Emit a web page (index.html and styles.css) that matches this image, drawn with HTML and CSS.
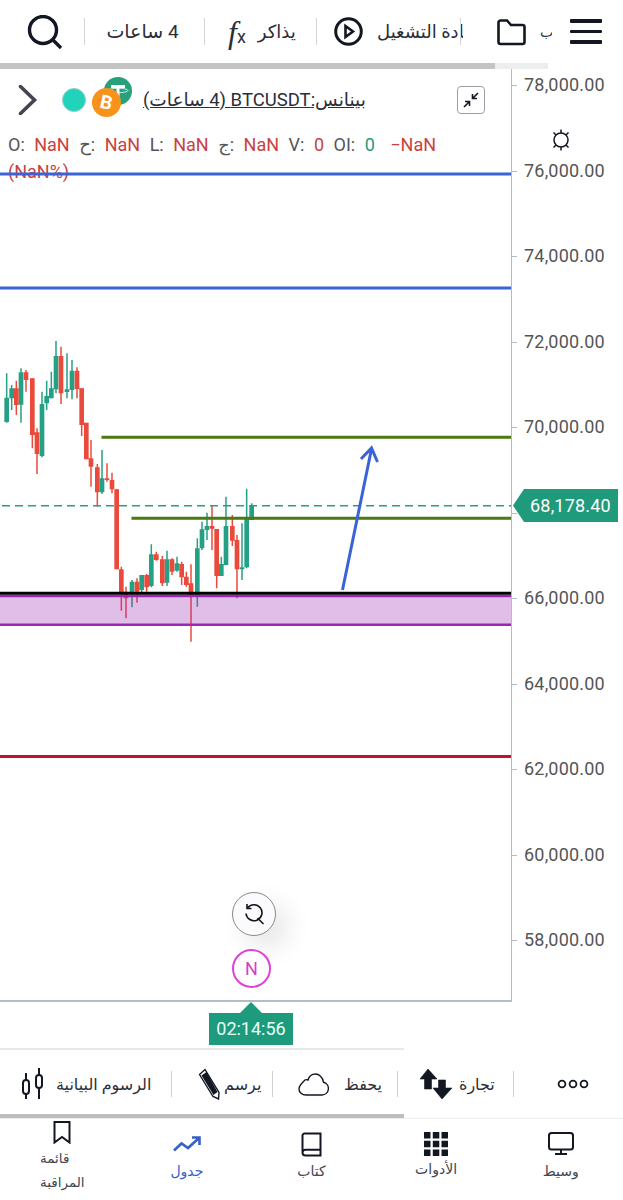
FILE: index.html
```html
<!DOCTYPE html>
<html lang="ar">
<head>
  <meta charset="UTF-8" />
  <title>BTCUSDT</title>
  <link rel="stylesheet" href="styles.css">
</head>
<body>
  <!-- Top toolbar -->
  <div class="topbar">
    <div class="seg seg-search">
      <svg width="36" height="34" viewBox="0 0 36 34" fill="none" stroke="#131722" stroke-width="3.4"><circle cx="16" cy="15" r="13.5"/><path d="M26 25l8 8"/></svg>
    </div>
    <div class="seg seg-time"><span dir="rtl">4 ساعات</span></div>
    <div class="seg seg-fx"><span class="fx"><i>f</i><b>x</b></span><span>يذاكر</span></div>
    <div class="seg seg-play">
      <svg class="play" width="29" height="29" viewBox="0 0 29 29" fill="none" stroke="#131722" stroke-width="3"><circle cx="14.5" cy="14.5" r="12.8"/><path d="M11.5 9l7.5 5.500-7.500 5.500z" stroke-width="2.600"/></svg>
      <span class="clipped"><span dir="rtl">إعادة التشغيل</span></span>
    </div>
    <div class="seg seg-menu">
      <svg width="29" height="29" viewBox="0 0 29 29" fill="none" stroke="#131722" stroke-width="2.600"><path d="M1.500 5.500a2 2 0 0 1 2-2h6.500l4 4.500h11.500a2 2 0 0 1 2 2v15a2 2 0 0 1-2 2h-22a2 2 0 0 1-2-2z"/></svg>
      <span class="cut">ب</span>
      <div class="burger"><i></i><i></i><i></i></div>
    </div>
  </div>
  <div class="top-scroll"><div class="top-thumb"></div></div>

  <!-- Chart and price axis -->
  <div class="chart-row">
    <div class="chart">
      <div class="legend">
        <div class="symbol-row">
          <svg class="chevron" width="20" height="30" viewBox="0 0 20 30" fill="none" stroke="#434651" stroke-width="3.600" stroke-linecap="round"><path d="M2.500 1.500l14 13.500-14 13.500"/></svg>
          <span class="dot"></span>
          <svg class="coins" width="42" height="40" viewBox="0 0 42 40">
            <circle cx="26" cy="14" r="14" fill="#26a17b"/>
            <path d="M19 8h14v3h-5.500v10h-3v-10h-5.500z" fill="#fff"/>
            <ellipse cx="26" cy="13.500" rx="10" ry="2.200" fill="none" stroke="#fff" stroke-width=".8"/>
            <circle cx="14.500" cy="25.500" r="14.500" fill="#f7931a"/>
            <text x="14.500" y="32" class="coin-b" transform="rotate(12 14.500 25)">B</text>
          </svg>
          <span class="symbol" dir="rtl">بينانس:BTCUSDT (4 ساعات)</span>
          <button class="collapse">
            <svg width="18" height="18" viewBox="0 0 18 18" fill="none" stroke="#131722" stroke-width="1.600"><path d="M16 2l-5.500 5.500M10.500 3v4.500H15M2 16l5.500-5.500M7.500 15v-4.500H3"/></svg>
          </button>
        </div>
        <div class="ohlc">
          <span>O: <em>NaN</em></span>
          <span>ح: <em>NaN</em></span>
          <span>L: <em>NaN</em></span>
          <span>ج: <em>NaN</em></span>
          <span>V: <em>0</em></span>
          <span>OI: <u>0</u></span>
          <span class="change"><em>−NaN</em></span>
          <span><em>(NaN%)</em></span>
        </div>
      </div>

      <!-- viewBox uses page coordinates; candles are traced at 3x -->
      <svg class="plot" viewBox="0 69 511 931" preserveAspectRatio="none">
        <path d="M0 174H511M0 288H511" stroke="#3a63d8" stroke-width="3" fill="none"/>
        <g transform="translate(0 330) scale(.33333)" fill="none">
          <path stroke="#26a085" stroke-width="4.500" d="M20 130V278M35 165V240M63 115V278M126 185V382M140 152V240M154 125V205M168 33V190M201 70V205M216 90V208M306 360V492M396 750V832M425 735V790M454 643V772M501 662V768M531 680V725M592 625V830M606 575V660M621 548V630M664 680V738M678 500V705M726 580V750M740 476V715M755 520V570"/>
          <path stroke="#26a085" stroke-width="14" d="M20 203V276M35 175V205M63 127V224M126 222V378M140 198V220M154 175V205M168 78V178M201 178V186M216 122V180M306 445V487M396 755V790M425 735V780M454 673V768M501 688V758M531 700V722M592 655V800M606 598V655M621 588V600M664 702V738M678 588V705M726 712V718M740 565V712M755 525V570"/>
          <path stroke="#ea4a3c" stroke-width="4.500" d="M49 152V255M78 120V185M97 145V355M111 295V432M183 50V222M231 112V205M245 175V318M259 278V388M273 330V470M292 402V530M321 400V455M336 428V490M350 478V718M364 710V842M378 770V865M411 745V818M440 732V785M469 665V692M487 678V768M516 685V735M545 695V765M559 725V770M573 703V935M636 528V660M650 597V775M697 555V648M711 615V805"/>
          <path stroke="#ea4a3c" stroke-width="14" d="M49 175V225M78 127V150M97 145V315M111 307V372M183 78V190M231 122V177M245 175V285M259 278V388M273 385V410M292 412V487M321 445V450M336 450V478M350 478V718M364 718V790M378 785V805M411 755V785M440 735V772M469 673V690M487 688V760M516 688V725M545 702V742M559 740V765M573 760V800M636 588V596M650 597V738M697 588V632M711 630V718"/>
        </g>
        <rect x="0" y="595" width="511" height="30" fill="#9c27b0" fill-opacity=".3"/>
        <path d="M0 596H511M0 624.700H511" stroke="#9c27b0" stroke-width="2.500" fill="none"/>
        <path d="M0 593.300H511" stroke="#000" stroke-width="3" fill="none"/>
        <path d="M2 505.700H511" stroke="#26a085" stroke-width="1.500" stroke-dasharray="8 5" fill="none"/>
        <path d="M101.500 437.300H511M131.500 518.300H511" stroke="#4a7a10" stroke-width="3" fill="none"/>
        <path d="M0 756.500H511" stroke="#c8102e" stroke-width="3" fill="none"/>
        <path d="M342.500 590L371.500 449M361 459l10.500-11 6 14" stroke="#3a63d8" stroke-width="3" fill="none"/>
      </svg>

      <button class="reset">
        <svg width="22" height="22" viewBox="0 0 22 22" fill="none" stroke="#131722" stroke-width="1.600"><path d="M4.500 5A8 8 0 1 1 3 10.500M4 1v4.500h4.500M14.500 15l6 6"/></svg>
      </button>
      <div class="news">N</div>
    </div>

    <div class="axis">
      <div class="tick">78,000.00</div>
      <div class="tick">76,000.00</div>
      <div class="tick">74,000.00</div>
      <div class="tick">72,000.00</div>
      <div class="tick">70,000.00</div>
      <div class="tick"></div>
      <div class="tick">66,000.00</div>
      <div class="tick">64,000.00</div>
      <div class="tick">62,000.00</div>
      <div class="tick">60,000.00</div>
      <div class="tick">58,000.00</div>
      <svg class="sun" width="24" height="24" viewBox="0 0 24 24" fill="none" stroke="#131722" stroke-width="1.500"><circle cx="12" cy="12" r="7"/><path d="M12 1.500v3.500M12 19v3.500M4.500 4.500l2.500 2.500M17 17l2.500 2.500M19.500 4.500L17 7M7 17l-2.500 2.500"/></svg>
      <div class="price-tag">68,178.40</div>
    </div>
  </div>

  <!-- Countdown below the time scale -->
  <div class="countdown"><span class="timer">02:14:56</span></div>

  <!-- Drawing toolbar -->
  <div class="toolbar">
    <div class="tool tool-charts">
      <svg width="24" height="32" viewBox="0 0 24 32" fill="none" stroke="#131722" stroke-width="2"><rect x="2" y="12" width="6" height="14" rx="3"/><path d="M5 5v7M5 26v5M18 0v7M18 20v11"/><rect x="15" y="7" width="6" height="13" rx="3"/></svg>
      <span>الرسوم البيانية</span>
    </div>
    <div class="tool tool-draw">
      <svg width="22" height="32" viewBox="0 0 22 32"><path d="M1.500 6.500L7 1.500l14 23-.5 6.500-5.500-2.500z" fill="#fff" stroke="#131722" stroke-width="1.400"/><path d="M3.500 7.500l5-3.500 11 20-4 3z" fill="#131722"/></svg>
      <span>يرسم</span>
    </div>
    <div class="tool tool-save">
      <svg width="31" height="23" viewBox="0 0 31 23" fill="none" stroke="#131722" stroke-width="1.400"><path d="M8 22h16a6.500 6.500 0 0 0 1.500-12.800C24.800 4 21 1 17.500 1c-4 0-6.500 2.500-7.500 6-1-.5-2.500-.4-3.500.3C4.500 10 1 12 1 16c0 3.500 3 6 7 6z"/></svg>
      <span>يحفظ</span>
    </div>
    <div class="tool tool-trade">
      <svg width="33" height="32" viewBox="0 0 33 32" fill="#131722"><path d="M8 1l9 10h-5.500v10h-7v-10H0zM22 31l-9-11h5.500V12h7v8H32z" stroke="#131722" stroke-width=".6"/></svg>
      <span>تجارة</span>
    </div>
    <div class="tool tool-more">
      <svg width="32" height="10" viewBox="0 0 32 10" fill="none" stroke="#131722" stroke-width="1.800"><circle cx="5" cy="5" r="3.400"/><circle cx="16" cy="5" r="3.400"/><circle cx="27" cy="5" r="3.400"/></svg>
    </div>
  </div>
  <div class="tool-scroll"></div>

  <!-- Bottom navigation -->
  <nav class="bottom-nav">
    <div class="nav-item nav-watch">
      <svg width="18" height="23" viewBox="0 0 18 23" fill="none" stroke="#131722" stroke-width="2"><path d="M1.500 1h15v20.500L9 16l-7.500 5.500z"/></svg>
      <span>قائمة<br>المراقبة</span>
    </div>
    <div class="nav-item active">
      <svg width="28" height="16" viewBox="0 0 28 16" fill="none" stroke="#3560c8" stroke-width="2.600"><path d="M1 14.500l7.500-7 6.500 4.500L26 2M19 1.500h7.500V9"/></svg>
      <span>جدول</span>
    </div>
    <div class="nav-item">
      <svg width="21" height="25" viewBox="0 0 21 25" fill="none" stroke="#131722" stroke-width="2"><path d="M1.500 20.500V3.500a2 2 0 0 1 2-2h16v22h-15a3 3 0 0 1-3-3zM1.500 20.500a3 3 0 0 1 3-2.800h15"/></svg>
      <span>كتاب</span>
    </div>
    <div class="nav-item nav-tools">
      <svg width="24" height="24" viewBox="0 0 24 24" fill="#131722"><path d="M0 0h6.500v6.500H0zM8.800 0h6.500v6.500H8.800zM17.500 0H24v6.500h-6.500zM0 8.800h6.500v6.500H0zM8.800 8.800h6.500v6.500H8.800zM17.500 8.800H24v6.500h-6.500zM0 17.500h6.500V24H0zM8.800 17.500h6.500V24H8.800zM17.500 17.500H24V24h-6.500z"/></svg>
      <span>الأدوات</span>
    </div>
    <div class="nav-item nav-broker">
      <svg width="26" height="23" viewBox="0 0 26 23" fill="none" stroke="#131722" stroke-width="2"><rect x="1" y="1" width="24" height="16.500" rx="2.500"/><path d="M13 17.500V22M7 22h12"/></svg>
      <span>وسيط</span>
    </div>
  </nav>
</body>
</html>
```

FILE: styles.css
```css
* {
  box-sizing: border-box;
}
html, body {
  margin: 0;
  height: 1200px;
  overflow: hidden;
  background: #fff;
}
body {
  font-family: Roboto, "Noto Sans", "DejaVu Sans", sans-serif;
  color: #2a2e39;
}
button {
  padding: 0;
  font: inherit;
}

/* top toolbar */
.topbar {
  display: grid;
  grid-template-columns: 84px 120px 112px 144px 1fr;
  height: 63px;
  align-items: center;
  font-size: 18px;
}
.seg {
  display: flex;
  align-items: center;
  height: 27px;
  border-left: 1px solid #d6d6d6;
}
.seg-search {
  border-left: none;
  padding-left: 27px;
}
.seg-time {
  justify-content: center;
  padding-right: 4px;
  font-size: 19px;
}
.seg-fx {
  gap: 12px;
  padding-left: 23px;
}
.fx {
  display: flex;
  align-items: flex-end;
}
.fx i {
  font: italic 32px "Liberation Serif", serif;
  line-height: 30px;
}
.fx b {
  font-weight: 400;
  font-size: 18px;
  line-height: 20px;
}
.seg-play {
  gap: 14px;
  padding-left: 17px;
}
.play {
  flex: none;
}
.clipped {
  width: 86px;
  flex: none;
  overflow: hidden;
  white-space: nowrap;
}
.seg-menu {
  padding-left: 36px;
}
.cut {
  width: 12px;
  margin-left: 14px;
  overflow: hidden;
  font-size: 14px;
}
.burger {
  display: flex;
  flex-direction: column;
  gap: 7px;
  width: 32px;
  margin-left: 18px;
}
.burger i {
  display: block;
  height: 3.5px;
  border-radius: 1px;
  background: #131722;
}
.top-scroll {
  height: 6px;
  width: 548px;
  background: #ededed;
}
.top-thumb {
  height: 6px;
  width: 495px;
  background: #c4c4c4;
}

/* chart */
.chart-row {
  display: flex;
  height: 933px;
}
.chart {
  position: relative;
  width: 512px;
  border-right: 1.5px solid #b2bcc4;
  border-bottom: 2px solid #b2bcc4;
}
.legend {
  padding: 6px 0 0 8px;
}
.symbol-row {
  display: flex;
  align-items: center;
  height: 50px;
  padding-right: 26px;
}
.chevron {
  margin-left: 10px;
}
.dot {
  width: 24px;
  height: 24px;
  margin-left: 24px;
  border-radius: 50%;
  background: #22d3bb;
  border: 1px solid #9cc;
}
.coins {
  margin: -6px 0 0 6px;
}
.coin-b {
  font: 700 19px Roboto, sans-serif;
  fill: #fff;
  text-anchor: middle;
}
.symbol {
  margin-left: 9px;
  font-size: 18.5px;
  text-decoration: underline;
  white-space: nowrap;
}
.collapse {
  display: flex;
  align-items: center;
  justify-content: center;
  width: 28px;
  height: 28px;
  margin-left: auto;
  border: 1px solid #9a9ea6;
  border-radius: 4px;
  background: #fff;
}
.ohlc {
  display: flex;
  flex-wrap: wrap;
  column-gap: 9.5px;
  width: 440px;
  margin-top: 6px;
  font-size: 18px;
  word-spacing: 5px;
  line-height: 27px;
  color: #555;
}
.ohlc em {
  font-style: normal;
  color: #c8423f;
}
.ohlc u {
  text-decoration: none;
  color: #1e9b7c;
}
.change {
  margin-left: 6px;
}
.plot {
  position: absolute;
  top: 0;
  left: 0;
  width: 511px;
  height: 931px;
}
.reset {
  position: absolute;
  top: 823px;
  left: 232px;
  display: flex;
  align-items: center;
  justify-content: center;
  width: 44px;
  height: 44px;
  border: 1px solid #8a8a8a;
  border-radius: 50%;
  background: #fbfbfd;
  box-shadow: 12px 12px 26px rgba(0,0,0,0.1);
}
.news {
  position: absolute;
  top: 880px;
  left: 232px;
  width: 39px;
  height: 39px;
  border: 2px solid #e040d8;
  border-radius: 50%;
  background: #fff;
  color: #d040c8;
  font-size: 18px;
  line-height: 35px;
  text-align: center;
}

/* price axis */
.axis {
  position: relative;
  flex: 1;
  padding-top: 6px;
  font-size: 18px;
  letter-spacing: .2px;
  color: #555;
}
.tick {
  display: flex;
  align-items: flex-start;
  gap: 7px;
  height: 85.55px;
  line-height: 20px;
}
.tick::before {
  content: "";
  width: 5px;
  height: 1px;
  margin-top: 10px;
  background: #b2bcc4;
}
.sun {
  position: absolute;
  top: 59px;
  left: 37px;
}
.price-tag {
  position: absolute;
  top: 420px;
  left: 1px;
  width: 105px;
  height: 33px;
  padding-left: 17px;
  background: #1f9a7b;
  color: #fff;
  line-height: 33px;
  clip-path: polygon(0 50%, 11px 0, 100% 0, 100% 100%, 11px 100%);
}

/* countdown */
.countdown {
  height: 46px;
  padding: 11px 0 0 209px;
}
.timer {
  position: relative;
  display: block;
  width: 84px;
  height: 32px;
  background: #1e9b7c;
  color: #e8fff8;
  font-size: 18px;
  line-height: 32px;
  text-align: center;
}
.timer::before {
  content: "";
  position: absolute;
  top: -11px;
  left: 31px;
  border: 11px solid transparent;
  border-top: none;
  border-bottom-color: #1e9b7c;
}

/* drawing toolbar */
.toolbar {
  display: grid;
  grid-template-columns: 171px 101px 125px 116px 1fr;
  align-items: center;
  height: 66px;
  padding-top: 4px;
  border-top: 2px solid transparent;
  background: linear-gradient(#e8e8e8, #e8e8e8) top left / 404px 2px no-repeat;
  background-origin: border-box;
  font-size: 16px;
}
.tool {
  display: flex;
  align-items: center;
  height: 26px;
  border-left: 1px solid #d0d0d0;
}
.tool-charts {
  gap: 11px;
  padding-left: 21px;
  border-left: none;
  white-space: nowrap;
}
.tool-draw {
  gap: 4px;
  padding-left: 26px;
}
.tool-save {
  gap: 15px;
  padding-left: 25px;
}
.tool-trade {
  gap: 6px;
  padding-left: 22px;
}
.tool-more {
  padding-left: 43px;
}
.tool-scroll {
  width: 404px;
  height: 4px;
  background: #bdbdbd;
}

/* bottom navigation */
.bottom-nav {
  display: grid;
  grid-template-columns: repeat(5, 1fr);
  height: 81px;
  border-top: 1px solid #ececec;
  font-size: 14px;
}
.nav-item {
  display: flex;
  flex-direction: column;
  align-items: center;
  gap: 6px;
  padding-top: 13px;
  color: #434651;
  text-align: center;
}
.nav-watch {
  gap: 2px;
  padding-top: 2px;
  font-size: 13.5px;
  line-height: 24px;
  text-align: left;
}
.nav-tools {
  gap: 5px;
}
.nav-broker {
  gap: 8px;
}
.active {
  gap: 11px;
  padding-top: 17px;
  color: #3560c8;
}
```
